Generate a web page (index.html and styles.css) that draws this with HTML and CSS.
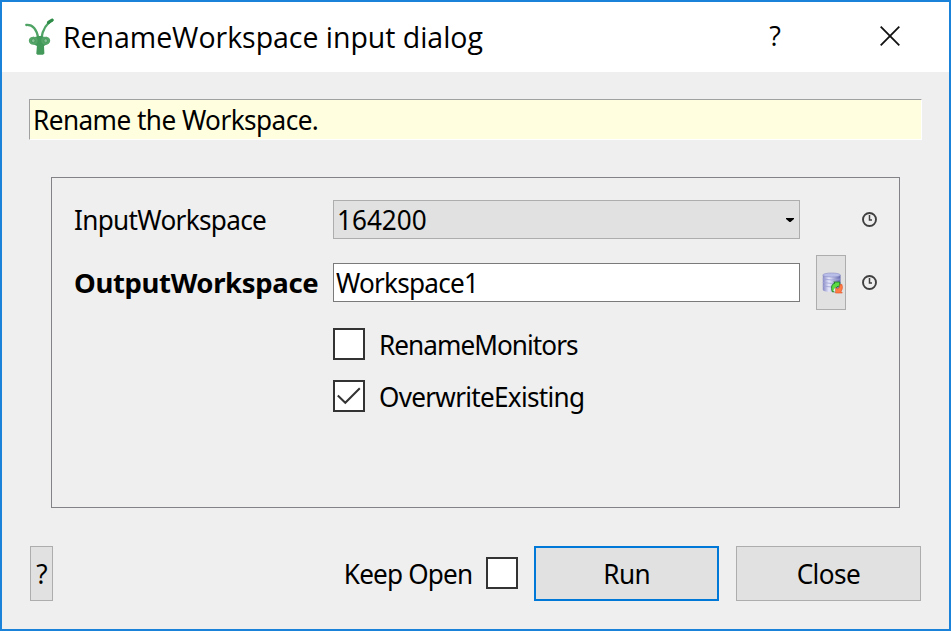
FILE: index.html
```html
<!DOCTYPE html>
<html lang="en">
<head>
<meta charset="utf-8">
<title>RenameWorkspace input dialog</title>
<link rel="stylesheet" href="styles.css">
</head>
<body>
<main class="dialog">
  <header class="titlebar">
    <svg class="logo" width="30" height="38" viewBox="0 0 30 38">
      <g fill="none" stroke="#4fa465" stroke-linecap="round">
        <path d="M1.300 7C7 6.500 11.500 11 13.300 20" stroke-width="2.300"/>
        <path d="M16.500 20C17.500 13 20.500 6 27.500 2" stroke-width="2.300"/>
        <path d="M23.500 4.500Q25 3 27 2.200" stroke="#2f8d49" stroke-width="3.200"/>
      </g>
      <path d="M8 18.800q3 .5 4.500-.8h4.500q2 1.300 5 .8v7.500l-3 1.700.4 7.500-1.400 1.300h-5.500l-1.200-1 .6-7.800-4-2z" fill="#43995a"/>
      <ellipse cx="8.300" cy="22.700" rx="4.500" ry="4" fill="#55a568"/>
      <ellipse cx="20.700" cy="22.700" rx="4.500" ry="4" fill="#55a568"/>
      <ellipse cx="8.300" cy="22.700" rx="1.800" ry="2" fill="#86bd93" stroke="#3f9456" stroke-width=".8"/>
      <ellipse cx="20.700" cy="22.700" rx="1.800" ry="2" fill="#86bd93" stroke="#3f9456" stroke-width=".8"/>
    </svg>
    <h1 class="title">RenameWorkspace input dialog</h1>
    <span class="context-help">?</span>
    <svg class="close-icon" width="20" height="20" viewBox="0 0 20 20"><path d="M.7.700l18.600 18.600M19.300.700L.7 19.300" stroke="#111" stroke-width="1.800"/></svg>
  </header>
  <p class="banner"><span class="text t-banner">Rename the Workspace.</span></p>
  <section class="group">
    <div class="row">
      <label class="label"><span class="text t-input">InputWorkspace</span></label>
      <div class="combo"><span class="text t-number">164200</span><svg width="8" height="4" viewBox="0 0 8 4"><path d="M0 0h8v1L4.500 4h-1L0 1z"/></svg></div>
      <span class="slot"></span>
      <svg class="clock" width="16" height="16" viewBox="0 0 16 16"><g fill="none" stroke="#404040" stroke-width="1.900"><circle cx="7.500" cy="7.500" r="6.500"/><path d="M7.500 3v5h2.500" stroke-width="1.500"/></g></svg>
    </div>
    <div class="row row-output">
      <label class="label"><strong class="text t-output">OutputWorkspace</strong></label>
      <div class="edit"><span class="text t-value">Workspace1</span></div>
      <span class="slot tool">
        <svg width="21" height="22" viewBox="0 0 21 22">
          <defs><linearGradient id="steel"><stop offset="0" stop-color="#8587c3"/><stop offset=".35" stop-color="#e6e8fc"/><stop offset="1" stop-color="#6266ab"/></linearGradient></defs>
          <path d="M.8 3v15c1 2.600 16.700 2.600 17.700 0V3z" fill="url(#steel)"/>
          <ellipse cx="9.600" cy="3" rx="8.800" ry="2" fill="#b9bee8" stroke="#8b8fc6" stroke-width=".6"/>
          <g fill="none" stroke="#a0a3d5" stroke-width=".8"><path d="M.8 7q9 2 17.600 0M.8 10.500q9 2 17.600 0M.8 14q9 2 17.600 0"/></g>
          <path d="M10.300 19.800C8.700 15 9.800 11.700 13 11.200L11.800 10h6v5.500l-1.500-1.300c-2.300.6-3.300 2.500-2.300 5.600z" fill="#5bdc45" stroke="#176f20" stroke-width=".8"/>
          <path d="M17.800 12.800l2-.5c1.100 3 .6 5.300-.8 7l1.300 1.700h-6.800v-5.500l1.700 1.500c1.900-.6 2.700-2 2.600-4.200z" fill="#ff7d45" stroke="#e04a20" stroke-width=".6"/>
          <path d="M13.300 20.500v-5l-2 3z" fill="#eceefa"/>
        </svg>
      </span>
      <svg class="clock" width="16" height="16" viewBox="0 0 16 16"><g fill="none" stroke="#404040" stroke-width="1.900"><circle cx="7.500" cy="7.500" r="6.500"/><path d="M7.500 3v5h2.500" stroke-width="1.500"/></g></svg>
    </div>
    <div class="options">
      <label class="option"><span class="check"></span><span class="text t-monitors">RenameMonitors</span></label>
      <label class="option"><span class="check"><svg width="24" height="18" viewBox="0 0 24 18"><path d="M.8 8.500L8.300 15.800 22.800 1.300" fill="none" stroke="#333" stroke-width="2"/></svg></span><span class="text t-overwrite">OverwriteExisting</span></label>
    </div>
  </section>
  <footer class="actions">
    <button class="button help"><span class="text">?</span></button>
    <label class="keep"><span class="text t-keep">Keep Open</span><span class="check"></span></label>
    <button class="button primary"><span class="text t-run">Run</span></button>
    <button class="button"><span class="text t-close">Close</span></button>
  </footer>
</main>
</body>
</html>
```
FILE: styles.css
```css
* { box-sizing: border-box; }
body { margin: 0; }
.dialog {
  width: 951px;
  height: 631px;
  border: 2px solid #1a82d8;
  background: #efefef;
  color: #000;
  font: 27.5px/36px "Noto Sans", sans-serif;
  display: flex;
  flex-direction: column;
}
.titlebar {
  height: 70px;
  flex: none;
  background: #fff;
  display: flex;
  align-items: center;
  padding: 0 49px 0 23px;
}
.logo { margin-right: 8px; }
.title {
  margin: 0 auto 0 0;
  font: 400 28.5px/36px "Open Sans", sans-serif;
  letter-spacing: -.03px;
  white-space: nowrap;
}
.context-help { font: 27px/36px "Open Sans", sans-serif; margin: 0 99px 3px 0; }
.close-icon { margin-bottom: 2px; }

/* Slightly condensed interface text */
.text { display: block; white-space: nowrap; transform: scaleX(.95); transform-origin: left; }
.t-banner { letter-spacing: -.57px; }
.t-input { letter-spacing: -.7px; }
.t-output { transform: none; letter-spacing: -.35px; }
.t-number { letter-spacing: 0; }
.t-value { letter-spacing: -.8px; }
.t-monitors { letter-spacing: -1px; }
.t-overwrite { letter-spacing: -.75px; }
.t-keep { letter-spacing: -.85px; transform-origin: right; }
.button .text { transform-origin: center; letter-spacing: -.6px; }

.banner {
  margin: 27px 27px 0;
  height: 41px;
  flex: none;
  background: #ffffdf;
  border: 1px solid #a0a0a0;
  border-right-color: #fff;
  border-bottom-color: #fff;
  padding: 2px 3px;
}
.group {
  margin: 37px 49px 0;
  height: 331px;
  flex: none;
  border: 1px solid #828287;
  padding: 14px 22px 0;
}
.row {
  display: grid;
  grid-template-columns: 259px 467px 30px 16px;
  align-items: center;
  height: 55px;
}
.row .slot { margin-left: 16px; width: 30px; }
.row .clock { margin-left: 32px; }
.row-output { margin-top: 8px; }
.combo, .edit { height: 39px; display: flex; align-items: center; }
.combo { border: 1px solid #adadad; background: #e1e1e1; justify-content: space-between; padding: 0 5px 0 3px; }
.edit { border: 1px solid #7a7a7a; background: #fff; padding: 0 2px; }
.tool {
  height: 55px;
  border: 1px solid #adadad;
  background: #e1e1e1;
  display: flex;
  align-items: center;
  justify-content: center;
  padding-left: 2px;
}
.options { margin: 18px 0 0 259px; display: grid; row-gap: 20px; }
.option { display: flex; align-items: center; height: 32px; gap: 14px; }
.option .text { padding-top: 2px; }
.check {
  width: 32px;
  height: 32px;
  flex: none;
  border: 2px solid #333;
  background: #fff;
  display: flex;
  align-items: center;
  justify-content: center;
}
.actions { display: flex; align-items: center; margin: 38px 28px 0; height: 55px; flex: none; }
.button {
  width: 185px;
  height: 55px;
  padding: 0;
  border: 1px solid #adadad;
  background: #e1e1e1;
  color: inherit;
  font: inherit;
  display: flex;
  align-items: center;
  justify-content: center;
}
.help { width: 23px; margin-right: auto; }
.primary { border: 2px solid #0078d7; margin: 0 17px 0 16px; }
.keep { display: flex; align-items: center; gap: 14px; }
.keep .check { margin-bottom: 2px; }
```
